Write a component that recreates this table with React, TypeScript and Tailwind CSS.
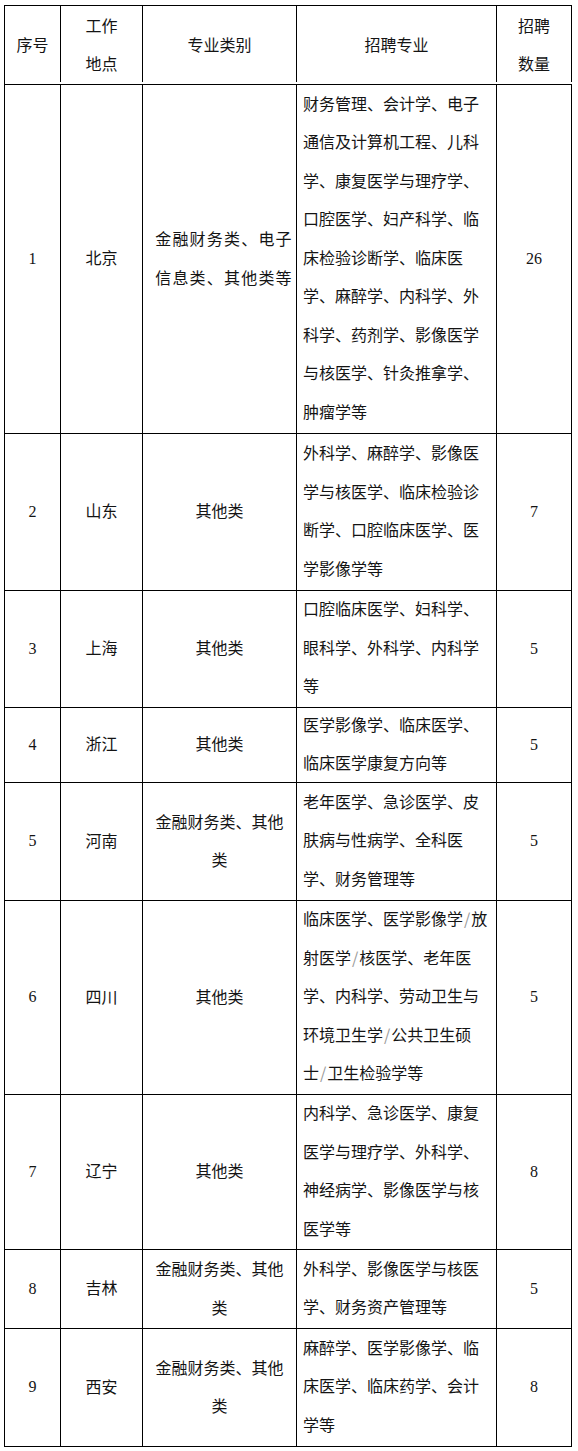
const font = { fontFamily: '"Noto Sans CJK SC", "Noto Sans", sans-serif' };

type Row = {
  no: string;
  place: string;
  kind: string[];
  majors: string[];
  count: string;
  h: string;
};

const rows: Row[] = [
  {
    no: "1",
    place: "北京",
    kind: ["金融财务类、电子", "信息类、其他类等"],
    majors: [
      "财务管理、会计学、电子",
      "通信及计算机工程、儿科",
      "学、康复医学与理疗学、",
      "口腔医学、妇产科学、临",
      "床检验诊断学、临床医",
      "学、麻醉学、内科学、外",
      "科学、药剂学、影像医学",
      "与核医学、针灸推拿学、",
      "肿瘤学等",
    ],
    count: "26",
    h: "h-[349px]",
  },
  {
    no: "2",
    place: "山东",
    kind: ["其他类"],
    majors: ["外科学、麻醉学、影像医", "学与核医学、临床检验诊", "断学、口腔临床医学、医", "学影像学等"],
    count: "7",
    h: "h-[157px]",
  },
  {
    no: "3",
    place: "上海",
    kind: ["其他类"],
    majors: ["口腔临床医学、妇科学、", "眼科学、外科学、内科学", "等"],
    count: "5",
    h: "h-[117px]",
  },
  {
    no: "4",
    place: "浙江",
    kind: ["其他类"],
    majors: ["医学影像学、临床医学、", "临床医学康复方向等"],
    count: "5",
    h: "h-[75px]",
  },
  {
    no: "5",
    place: "河南",
    kind: ["金融财务类、其他", "类"],
    majors: ["老年医学、急诊医学、皮", "肤病与性病学、全科医", "学、财务管理等"],
    count: "5",
    h: "h-[118px]",
  },
  {
    no: "6",
    place: "四川",
    kind: ["其他类"],
    majors: [
      "临床医学、医学影像学/放",
      "射医学/核医学、老年医",
      "学、内科学、劳动卫生与",
      "环境卫生学/公共卫生硕",
      "士/卫生检验学等",
    ],
    count: "5",
    h: "h-[194px]",
  },
  {
    no: "7",
    place: "辽宁",
    kind: ["其他类"],
    majors: ["内科学、急诊医学、康复", "医学与理疗学、外科学、", "神经病学、影像医学与核", "医学等"],
    count: "8",
    h: "h-[155px]",
  },
  {
    no: "8",
    place: "吉林",
    kind: ["金融财务类、其他", "类"],
    majors: ["外科学、影像医学与核医", "学、财务资产管理等"],
    count: "5",
    h: "h-[79px]",
  },
  {
    no: "9",
    place: "西安",
    kind: ["金融财务类、其他", "类"],
    majors: ["麻醉学、医学影像学、临", "床医学、临床药学、会计", "学等"],
    count: "8",
    h: "h-[118px]",
  },
];

// slashes in the source are lighter and thinner than the CJK glyphs
function Line({ text }: { text: string }) {
  const parts = text.split("/");
  return (
    <div className="whitespace-nowrap">
      {parts.map((p, i) => (
        <span key={i}>
          {i > 0 && <span className="text-[#9a9a9a] px-[1px]">/</span>}
          {p}
        </span>
      ))}
    </div>
  );
}

function Num({ v }: { v: string }) {
  return (
    <span className="text-[16px]" style={{ fontFamily: '"Liberation Serif", serif' }}>
      {v}
    </span>
  );
}

export default function App() {
  return (
    <div className="min-h-[1451px] bg-white pt-[5px] pl-[4px] text-[16px] leading-[38.5px] text-[#141414]" style={font}>
      <div className="w-[568px] border-l border-t border-black">
        <div className="flex h-[79px] border-b border-black pb-[2px]">
          <div className="w-[56px] shrink-0 border-r border-black flex items-center justify-center">序号</div>
          <div className="w-[82px] shrink-0 border-r border-black flex flex-col items-center justify-center">
            <div>工作</div>
            <div>地点</div>
          </div>
          <div className="w-[154px] shrink-0 border-r border-black flex items-center justify-center">专业类别</div>
          <div className="w-[200px] shrink-0 border-r border-black flex items-center justify-center">招聘专业</div>
          <div className="w-[75px] shrink-0 border-r border-black flex flex-col items-center justify-center">
            <div>招聘</div>
            <div>数量</div>
          </div>
        </div>

        {rows.map((r) => (
          <div key={r.no} className={`flex border-b border-black ${r.h}`}>
            <div className="w-[56px] shrink-0 border-r border-black flex items-center justify-center">
              <Num v={r.no} />
            </div>
            <div className="w-[82px] shrink-0 border-r border-black flex items-center justify-center pb-[3px]">{r.place}</div>
            <div
              className={`w-[154px] shrink-0 border-r border-black flex flex-col items-center justify-center pb-[3px] ${
                r.no === "1" ? "pl-[9px] tracking-[1.2px]" : ""
              }`}
            >
              {r.kind.map((k) => (
                <Line key={k} text={k} />
              ))}
            </div>
            <div className="w-[200px] shrink-0 border-r border-black flex flex-col justify-center pl-[6px] pb-[4px]">
              {r.majors.map((m) => (
                <Line key={m} text={m} />
              ))}
            </div>
            <div className="w-[75px] shrink-0 border-r border-black flex items-center justify-center">
              <Num v={r.count} />
            </div>
          </div>
        ))}
      </div>
    </div>
  );
}
